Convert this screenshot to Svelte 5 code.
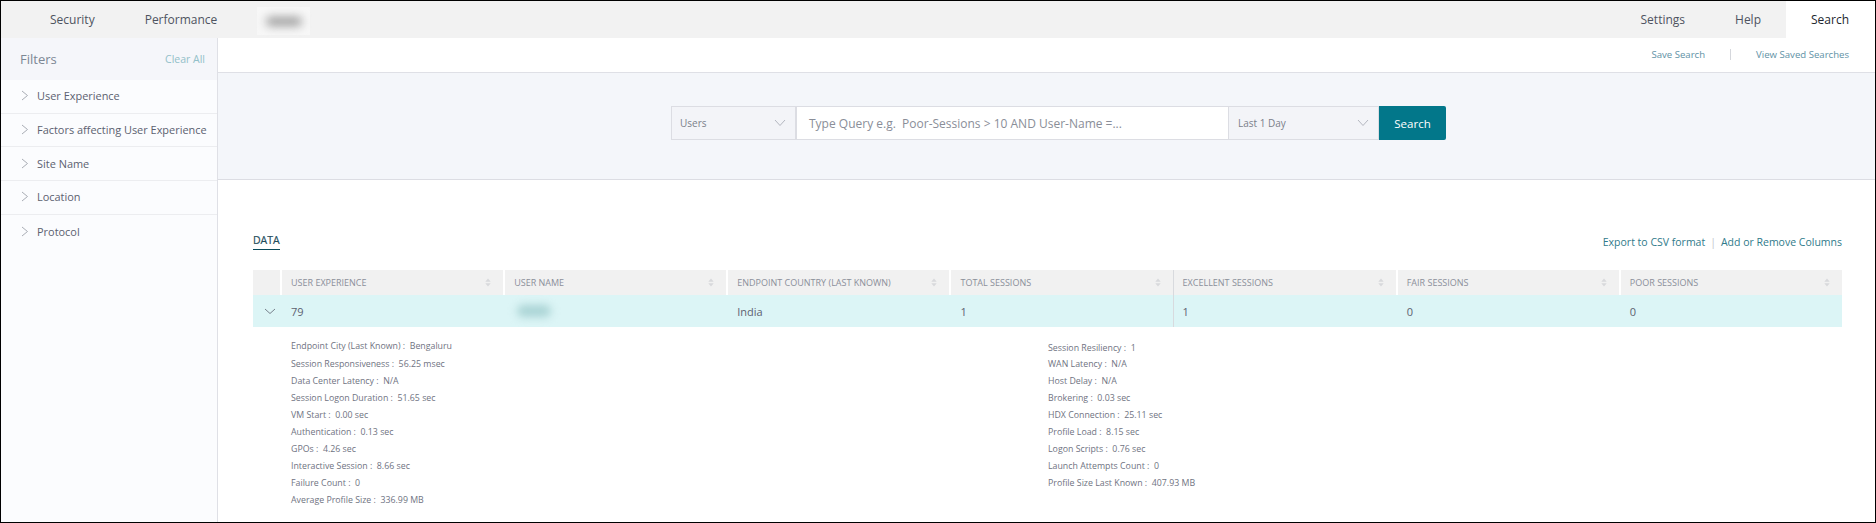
<script>
  const filters = ['User Experience', 'Factors affecting User Experience', 'Site Name', 'Location', 'Protocol'];
  const cols = [
    ['USER EXPERIENCE', '79'],
    ['USER NAME', ''],
    ['ENDPOINT COUNTRY (LAST KNOWN)', 'India'],
    ['TOTAL SESSIONS', '1'],
    ['EXCELLENT SESSIONS', '1'],
    ['FAIR SESSIONS', '0'],
    ['POOR SESSIONS', '0']
  ];
  const left = [
    ['Endpoint City (Last Known)', 'Bengaluru'],
    ['Session Responsiveness', '56.25 msec'],
    ['Data Center Latency', 'N/A'],
    ['Session Logon Duration', '51.65 sec'],
    ['VM Start', '0.00 sec'],
    ['Authentication', '0.13 sec'],
    ['GPOs', '4.26 sec'],
    ['Interactive Session', '8.66 sec'],
    ['Failure Count', '0'],
    ['Average Profile Size', '336.99 MB']
  ];
  const right = [
    ['Session Resiliency', '1'],
    ['WAN Latency', 'N/A'],
    ['Host Delay', 'N/A'],
    ['Brokering', '0.03 sec'],
    ['HDX Connection', '25.11 sec'],
    ['Profile Load', '8.15 sec'],
    ['Logon Scripts', '0.76 sec'],
    ['Launch Attempts Count', '0'],
    ['Profile Size Last Known', '407.93 MB']
  ];
</script>

<div class="frame">
  <header class="top">
    <nav class="nav">
      <span class="tab">Security</span>
      <span class="tab">Performance</span>
      <span class="blurred"><i></i></span>
    </nav>
    <nav class="nav">
      <span class="tab">Settings</span>
      <span class="tab">Help</span>
      <span class="tab active">Search</span>
    </nav>
  </header>

  <div class="body">
    <aside class="side">
      <div class="side-head">
        <span class="side-title">Filters</span>
        <span class="clear">Clear All</span>
      </div>
      {#each filters as f}
        <div class="filter">
          <svg class="chev" width="8" height="11" viewBox="0 0 8 11"><path d="M1 1l5.5 4.5L1 10" fill="none" stroke="#a9adb5" stroke-width="1"/></svg>
          <span>{f}</span>
        </div>
      {/each}
    </aside>

    <main class="main">
      <div class="sub">
        <span class="sublink">Save Search</span>
        <span class="subsep"></span>
        <span class="sublink">View Saved Searches</span>
      </div>

      <section class="band">
        <div class="group">
          <div class="sel users">
            <span>Users</span>
            <svg width="12" height="8" viewBox="0 0 12 8"><path d="M1 1l5 5.5L11 1" fill="none" stroke="#b4b7c0" stroke-width="1"/></svg>
          </div>
          <div class="query">Type Query e.g.&nbsp; Poor-Sessions &gt; 10 AND User-Name =...</div>
          <div class="sel days">
            <span>Last 1 Day</span>
            <svg width="12" height="8" viewBox="0 0 12 8"><path d="M1 1l5 5.5L11 1" fill="none" stroke="#b4b7c0" stroke-width="1"/></svg>
          </div>
          <div class="btn">Search</div>
        </div>
      </section>

      <section class="content">
        <div class="bar">
          <span class="data-tab">DATA</span>
          <div class="links">
            <span>Export to CSV format</span>
            <span class="pipe">|</span>
            <span>Add or Remove Columns</span>
          </div>
        </div>

        <div class="table">
          <div class="th first"></div>
          {#each cols as c, i}
            <div class="th" class:ruled={i === 4}>
              <span>{c[0]}</span>
              <svg width="6" height="9" viewBox="0 0 6 9"><path d="M3 0.5L5.7 3.7H0.3z M0.3 5.3H5.7L3 8.5z" fill="#d8d9dc"/></svg>
            </div>
          {/each}
          <div class="td first">
            <svg width="12" height="7" viewBox="0 0 12 7"><path d="M1 1l5 4.5L11 1" fill="none" stroke="#77808c" stroke-width="1"/></svg>
          </div>
          {#each cols as c, i}
            <div class="td" class:ruled={i === 4}>
              {#if i === 1}<span class="user-blur"></span>{:else}{c[1]}{/if}
            </div>
          {/each}
        </div>

        <div class="details">
          <div class="dcol">
            {#each left as r, i}
              <div class="dline" class:head={i === 0}>{r[0]} :&nbsp; {r[1]}</div>
            {/each}
          </div>
          <div class="dcol">
            {#each right as r, i}
              <div class="dline" class:lead={i === 0}>{r[0]} :&nbsp; {r[1]}</div>
            {/each}
          </div>
        </div>
      </section>
    </main>
  </div>
</div>

<style>
  :global(body) { margin: 0; background: #fff; }
  .frame {
    width: 1876px; height: 523px; box-sizing: border-box;
    border: 1px solid #000;
    font-family: "Open Sans", sans-serif; color: #5f6472;
    display: flex; flex-direction: column; overflow: hidden;
  }
  .top {
    height: 37px; flex: none; background: #f2f2f2;
    display: flex; justify-content: space-between; padding-left: 24px;
  }
  .nav { display: flex; align-items: stretch; }
  .tab {
    padding: 0 25px; display: flex; align-items: center;
    font-size: 12px; color: #4e5360;
  }
  .tab.active { background: #fff; color: #22262e; padding-right: 26px; }
  .blurred {
    margin: 6px 0 3px 15px; width: 53px; background: #f7f7f7;
    display: flex; align-items: center; justify-content: center;
  }
  .blurred i { width: 36px; height: 9px; background: #9c9c9c; border-radius: 5px; filter: blur(5px); }
  .body { flex: 1; display: flex; min-height: 0; }

  .side { width: 216px; flex: none; background: #fbfcfe; border-right: 1px solid #dfe0e6; }
  .side-head {
    height: 42px; background: #f5f6fa; box-sizing: border-box;
    display: flex; justify-content: space-between; align-items: center;
    padding: 0 12px 0 19px;
  }
  .side-title { font-size: 13px; color: #7c8794; }
  .clear { font-size: 10.5px; color: #92c0c9; }
  .filter {
    height: 33.7px; box-sizing: border-box; border-bottom: 1px solid #ecedf0;
    display: flex; align-items: center; padding: 0 0 1px 20px; gap: 8px;
    font-size: 10.95px; color: #5c6170;
  }
  .filter:last-child { border-bottom: 0; }
  .chev { flex: none; }

  .main { flex: 1; min-width: 0; display: flex; flex-direction: column; }
  .sub {
    height: 35px; flex: none; box-sizing: border-box;
    display: flex; justify-content: flex-end; align-items: center;
    padding: 0 26px 2px 0; border-bottom: 1px solid #dfe0e6;
  }
  .sublink { font-size: 9.6px; color: #5f92a6; }
  .subsep { width: 1px; height: 11px; background: #d5d7dc; margin: 0 25px; }
  .band {
    height: 107px; flex: none; box-sizing: border-box;
    background: #f4f6fa; border-bottom: 1px solid #dcdde3;
    display: flex; align-items: flex-start; padding: 33px 0 0 453px;
  }
  .group { display: flex; height: 34px; }
  .sel {
    background: #f3f4f8; border: 1px solid #dcdde3; box-sizing: border-box;
    display: flex; align-items: center; justify-content: space-between;
    font-size: 10px; color: #7b7f8a;
  }
  .users { width: 126px; padding: 0 9px 0 8px; border-right-width: 2px; }
  .days { width: 150px; padding: 0 9px; border-left: 0; }
  .query {
    width: 432px; box-sizing: border-box; background: #fff;
    border-top: 1px solid #dcdde3; border-bottom: 1px solid #dcdde3; border-right: 1px solid #dcdde3;
    display: flex; align-items: center; padding-left: 12px;
    font-size: 12px; color: #8a8e98;
  }
  .btn {
    width: 67px; background: #02778a; border-radius: 0 2px 2px 0; color: #fff;
    display: flex; align-items: center; justify-content: center; font-size: 11.5px;
  }

  .content { flex: 1; padding: 0 33px 0 35px; min-height: 0; }
  .bar { display: flex; justify-content: space-between; align-items: flex-start; height: 90px; padding-top: 52px; box-sizing: border-box; }
  .data-tab {
    font-size: 10.5px; color: #1f4d5c; line-height: 16px; padding-bottom: 1px;
    border-bottom: 1px solid #0b4a5a; -webkit-text-stroke: 0.2px #1f4d5c;
  }
  .links { display: flex; gap: 5px; font-size: 10.5px; color: #2f7a8a; line-height: 18px; margin-top: 1px; }
  .pipe { color: #c3c6cc; }

  .table { display: grid; grid-template-columns: 27px repeat(7, minmax(0, 1fr)); }
  .th {
    height: 25px; background: #f1f1f1; box-sizing: border-box;
    border-left: 2px solid #fff; padding: 0 12px 0 9px;
    display: flex; align-items: center; justify-content: space-between;
    font-size: 9px; color: #8b8f9a;
  }
  .th.first { border-left: 0; }
  .th.ruled { border-left: 1px solid #d8dade; }
  .td {
    height: 32px; background: #dcf5f6; box-sizing: border-box; padding-left: 11px;
    display: flex; align-items: center; font-size: 11px; color: #5c6170;
  }
  .td.ruled { border-left: 1px solid #d8dade; padding-left: 9px; }
  .user-blur { width: 34px; height: 12px; background: #a9d3d4; filter: blur(4px); border-radius: 6px; margin-left: 3px; }

  .details { display: grid; grid-template-columns: 757px 1fr; padding: 11px 0 0 38px; }
  .dline { font-size: 8.8px; line-height: 17px; color: #6f7382; white-space: nowrap; }
  .dline.head { height: 18px; }
  .dline.lead { height: 16px; }
  .dcol:last-child { padding-top: 2px; }
</style>
